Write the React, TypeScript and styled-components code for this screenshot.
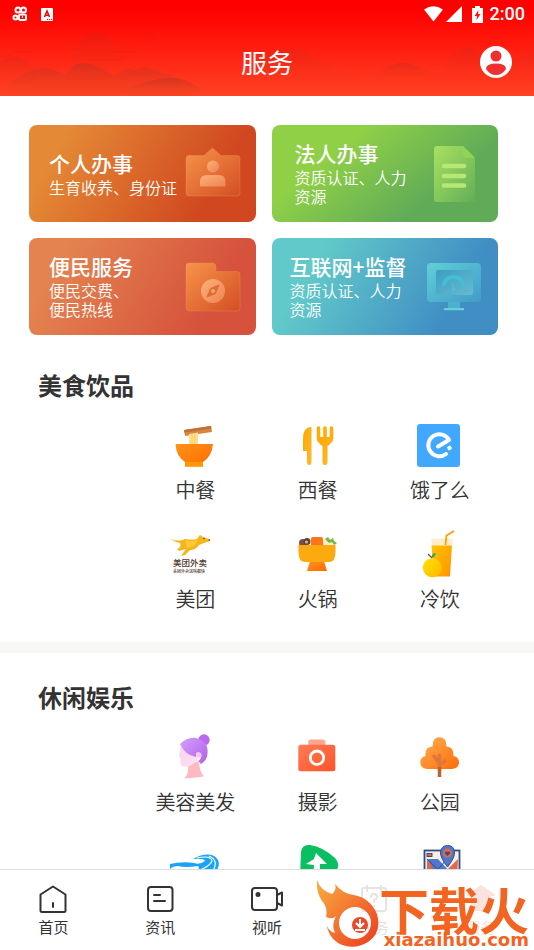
import React from "react";
import styled, { createGlobalStyle } from "styled-components";

const GlobalStyle = createGlobalStyle`
  * { box-sizing: border-box; }
  body { margin: 0; background: #fff; font-family: "Noto Sans CJK SC", sans-serif; color: #333; }
  a { color: inherit; text-decoration: none; }
  svg { display: block; overflow: visible; flex: none; }
`;

const Screen = styled.div`
  height: 100vh;
  display: flex;
  flex-direction: column;
  overflow: hidden;
`;

const Header = styled.header`
  position: relative;
  flex: none;
  background: linear-gradient(#ff0000 10%, #ff4223);
  color: #fff;
`;

const Hills = styled.svg`
  position: absolute;
  inset: 0;
  width: 100%;
  height: 100%;
`;

const StatusBar = styled.div`
  position: relative;
  height: 28px;
  padding: 0 9px 0 13px;
  display: flex;
  align-items: center;
  justify-content: space-between;
`;

const StatusGroup = styled.div<{ $gap: number }>`
  display: flex;
  align-items: center;
  gap: ${(p) => p.$gap}px;
`;

const Clock = styled.time`
  font: 500 18px/28px Roboto, sans-serif;
  margin-left: 2px;
`;

const TitleBar = styled.div`
  position: relative;
  height: 68px;
  padding: 0 26px;
  display: grid;
  grid-template-columns: 1fr auto 1fr;
  align-items: center;
`;

const PageTitle = styled.h1`
  grid-column: 2;
  margin: 0;
  font-size: 26px;
  line-height: 36px;
  font-weight: 400;
`;

const ProfileButton = styled.button`
  justify-self: end;
  margin-right: -4px;
  padding: 0;
  border: 0;
  background: none;
  color: #fff;
  cursor: pointer;
`;

const Content = styled.main`
  flex: 1;
  min-height: 0;
  overflow-y: auto;
  scrollbar-width: none;
`;

const CardGrid = styled.nav`
  display: grid;
  grid-template-columns: 1fr 1fr;
  gap: 16px;
  padding: 29px 36px 0 29px;
`;

const Card = styled.a<{ $fill: string; $inset: number }>`
  height: 97px;
  padding: 0 16px 0 ${(p) => p.$inset}px;
  border-radius: 8px;
  background: ${(p) => p.$fill};
  && { color: #fff; }
  display: flex;
  align-items: center;
  justify-content: space-between;
`;

const CardText = styled.div`
  padding-bottom: 3px;
  white-space: nowrap;
`;

const CardTitle = styled.h2`
  margin: 0;
  font-size: 21px;
  line-height: 30px;
  font-weight: 500;
`;

const CardNote = styled.p`
  margin: 0;
  font-size: 16px;
  line-height: 19px;
  font-weight: 350;
  white-space: pre-line;
`;

const CardIcon = styled.svg`
  width: 56px;
  height: 56px;
  margin-left: -16px;
`;

const Section = styled.section`
  padding: 32px 33px 31px 12px;
  & + & {
    border-top: 11px solid #f7f7f6;
    padding-top: 26px;
  }
`;

const SectionTitle = styled.h2`
  margin: 0 0 20px 26px;
  font-size: 24px;
  line-height: 36px;
  font-weight: 700;
`;

const ServiceGrid = styled.div`
  display: grid;
  grid-template-columns: repeat(4, 1fr);
  row-gap: 30px;
`;

const Service = styled.a<{ $first: boolean }>`
  ${(p) => (p.$first ? "grid-column-start: 2;" : "")}
  display: flex;
  flex-direction: column;
  align-items: center;
  gap: 11px;
  min-height: 79px;
  font-size: 20px;
  line-height: 24px;
  font-weight: 350;
  white-space: nowrap;
`;

const ServiceIcon = styled.svg`
  width: 44px;
  height: 44px;
`;

const TabBar = styled.nav`
  position: relative;
  flex: none;
  height: 81px;
  border-top: 1px solid #ddd;
  background: #fff;
  display: grid;
  grid-template-columns: repeat(5, 1fr);
`;

const Tab = styled.a<{ $tone: string }>`
  && { color: ${(p) => p.$tone}; }
  padding-top: 15px;
  display: flex;
  flex-direction: column;
  align-items: center;
  gap: 3px;
  font-size: 15px;
  line-height: 22px;
`;

const TabIcon = styled.svg`
  width: 34px;
  height: 28px;
  fill: none;
  stroke: currentColor;
  stroke-width: 2;
  stroke-linejoin: round;
  stroke-linecap: round;
`;

const Brand = styled.div`
  position: absolute;
  right: 5px;
  bottom: 1px;
  display: flex;
  align-items: flex-end;
  color: #f2641f;
`;

const BrandFlame = styled.svg`
  width: 62px;
  height: 67px;
  margin-bottom: 2px;
`;

const BrandWords = styled.div`
  display: flex;
  flex-direction: column;
  align-items: flex-end;
`;

const BrandName = styled.strong`
  font-size: 50px;
  line-height: 46px;
  font-weight: 700;
`;

const BrandSite = styled.span`
  font: 700 18px/18px "DejaVu Sans", sans-serif;
`;

const cards = [
  {
    title: "个人办事",
    note: "生育收养、身份证",
    inset: 20,
    fill: "linear-gradient(120deg, #e48935 15%, #d14820 78%)",
    icon: (
      <>
        <path d="M5 9.500H20L28.500 2L37 9.500H53Q56 9.500 56 12.500V47Q56 50 53 50H5Q2 50 2 47V12.500Q2 9.500 5 9.500Z" fill="url(#orange)" stroke="#f99b55" strokeOpacity=".3" />
        <circle cx="29" cy="20.500" r="6" fill="url(#peach)" />
        <path d="M16 40.500V36Q16 29 23 29H35Q41.500 29 41.500 36V40.500Z" fill="url(#peach)" />
      </>
    ),
  },
  {
    title: "法人办事",
    note: "资质认证、人力\n资源",
    inset: 23,
    fill: "linear-gradient(140deg, #8fd047 28%, #60ab58 72%)",
    icon: (
      <>
        <path d="M11 0H37L49 12V53Q49 56 46 56H11Q8 56 8 53V3Q8 0 11 0Z" fill="url(#lime)" />
        <path d="M37 0L49 12H40Q37 12 37 9Z" fill="#8ed553" />
        <path d="M18 20H38M18 30H38M18 39.500H38" stroke="#b7e876" strokeWidth="4.500" strokeLinecap="round" />
      </>
    ),
  },
  {
    title: "便民服务",
    note: "便民交费、\n便民热线",
    inset: 20,
    fill: "linear-gradient(120deg, #e4834f 15%, #d6523d 78%)",
    icon: (
      <>
        <path d="M5 4H28Q32 4 32 8V12.500H53Q56 12.500 56 15.500V49Q56 52 53 52H5Q2 52 2 49V7Q2 4 5 4Z" fill="url(#orange)" stroke="#f99b55" strokeOpacity=".3" />
        <circle cx="29" cy="32" r="12" fill="url(#peach)" />
        <path d="M35 26L31.500 34.500L23 38L26.500 29.500Z" fill="#df6d32" stroke="#df6d32" strokeLinejoin="round" />
        <circle cx="29" cy="32" r="2" fill="#f9a267" />
      </>
    ),
  },
  {
    title: "互联网+监督",
    note: "资质认证、人力\n资源",
    inset: 18,
    fill: "linear-gradient(120deg, #61c9c9 20%, #408ec4 78%)",
    icon: (
      <>
        <path d="M22 42H34V49H38V51.500H18V49H22Z" fill="#4bb1cd" />
        <path d="M18 50H38" stroke="#65cfe0" strokeWidth="2" />
        <rect x="1" y="4" width="54" height="39" rx="4" fill="url(#aqua)" />
        <rect x="10" y="11" width="37" height="25" rx="2" fill="url(#glass)" />
        <path d="M18 25Q20 18 28 18Q35 18 37 25" fill="none" stroke="#43bfd5" strokeWidth="4" strokeLinecap="round" />
        <path d="M26 23L30 31Q28 33 26 31Z" fill="#50bdd2" />
      </>
    ),
  },
];

type Item = { label?: string; hint?: string; icon: React.ReactNode };

const food: Item[] = [
  {
    label: "中餐",
    icon: (
      <>
        <path d="M11 7L38 3L39 9L12 13Z" fill="#d98542" />
        <path d="M11 7L38 3L38.500 5.500L11.500 9.500Z" fill="#c06f35" />
        <path d="M16 11L25 9.500V22H16Z" fill="#ffe08a" />
        <path d="M19 10.500V22M22 10V22" stroke="#ffc94d" strokeWidth=".7" />
        <path d="M2.500 21H40Q39 33 30 39V43.500H12V39Q3 33 2.500 21Z" fill="url(#bowl)" />
        <path d="M12 39H30V43.500H12Z" fill="#ff9800" />
      </>
    ),
  },
  {
    label: "西餐",
    icon: (
      <>
        <path d="M15.500 4V39.500Q15.500 42 13.200 42Q11 42 11 39.500V28H7V16Q7 4 15.500 4Z" fill="url(#amber)" />
        <path d="M22.500 5V15Q22.500 19.500 29 19.500Q35.500 19.500 35.500 15V5M29 5V20" stroke="#ffab0b" strokeWidth="3.600" strokeLinecap="round" fill="none" />
        <path d="M22 14H36Q36 21 31.500 23V39.500Q31.500 42 29 42Q26.500 42 26.500 39.500V23Q22 21 22 14Z" fill="url(#amber)" />
      </>
    ),
  },
  {
    label: "饿了么",
    icon: (
      <>
        <rect x="-1" y="1" width="43" height="43" rx="3" fill="#40a9ff" />
        <path d="M20 23.500L31 17A11 11 0 1 0 28 31" fill="none" stroke="#fff" strokeWidth="4" strokeLinecap="round" strokeLinejoin="round" />
        <rect x="29.500" y="23" width="4" height="4" rx="1" fill="#fff" transform="rotate(60 31.500 25)" />
      </>
    ),
  },
  {
    label: "美团",
    icon: (
      <>
        <path d="M-3 7Q6 10 12 7Q20 8 24 7L27 3L30 5L36 7L37 9L31 11L26 13Q23 18 17 18L12 23L8 24L13 17L6 19L4 17Q9 15 7 11Q2 10-3 7Z" fill="#f6b51c" />
        <path d="M12 8Q20 10 25 8L21 14L14 16Z" fill="#ffca35" />
        <path d="M35.500 7L37.500 8L36 9Z" fill="#392817" />
        <circle cx="31" cy="6.500" r=".7" fill="#392817" />
        <text x="0" y="34" fontSize="8.500" fontWeight="500" fill="#503a2b">美团外卖</text>
        <text x="0" y="41" fontSize="4" fontWeight="500" fill="#503a2b">美团外卖送啥都快</text>
      </>
    ),
  },
  {
    label: "火锅",
    icon: (
      <>
        <circle cx="7" cy="11" r="4" fill="#75513e" />
        <circle cx="11" cy="9.500" r="3.500" fill="#5e4436" />
        <circle cx="10.500" cy="10" r="1.500" fill="#d9b895" />
        <path d="M26 14L28 7L31 6L34 9L37 8L40 12L39 14Z" fill="#ffedc4" />
        <path d="M29 7L32 5L34 8L37 6L38 9L41 11L38 13L36 10L33 11Z" fill="#72b844" />
        <path d="M15 14V7Q15 5 17 5H25Q27 5 27 7V14Z" fill="#ff7418" />
        <path d="M14 29H28L31 39H11Z" fill="url(#bowl)" />
        <path d="M2.500 13H39.500V20Q39.500 30 33 30H9Q2.500 30 2.500 20Z" fill="#fcaa10" />
      </>
    ),
  },
  {
    label: "冷饮",
    icon: (
      <>
        <path d="M13.300 6.500H34.500L34 15H14Z" fill="#ffedcc" />
        <path d="M13.500 13.500H34L32 44.500H16Z" fill="url(#juice)" />
        <path d="M27.500 13L28.500 3.500L36 -1" fill="none" stroke="#ffa000" strokeWidth="1.800" />
        <circle cx="14.300" cy="35.700" r="9.500" fill="url(#fruit)" />
        <path d="M13.500 25Q14 21 17.500 21Q18 25 13.500 26Z" fill="#2eac66" />
        <path d="M14 26L10 22" stroke="#78503d" strokeWidth="1.300" />
      </>
    ),
  },
];

const leisure: Item[] = [
  {
    label: "美容美发",
    icon: (
      <>
        <path d="M11 31L26 26Q26 36 31 41.500Q20 43 11.500 43.500Q16 38 15 31Z" fill="#ffb9c1" />
        <path d="M8 10L6 22L7.500 23L7.500 29Q9 33 17 31L24 26L27 15Z" fill="url(#face)" />
        <circle cx="31" cy="5" r="5.700" fill="#ba68ec" />
        <path d="M7 9Q14 2 22 2.700Q36 6 34.500 19Q34 25 28 29L25.500 26Q29 23 28 19Q26 16 23 18V22Q12 20 7 9Z" fill="url(#hair)" />
        <circle cx="26" cy="20" r="2.600" fill="#f5c4ee" />
      </>
    ),
  },
  {
    label: "摄影",
    icon: (
      <>
        <path d="M12.300 10V7Q12.300 4.500 15 4.500H26.500Q29.300 4.500 29.300 7V10Z" fill="#ffa68d" />
        <rect x="2.300" y="9.700" width="37" height="26.500" rx="2.500" fill="url(#coral)" />
        <circle cx="21" cy="22.700" r="6.700" fill="none" stroke="#fff" strokeWidth="2.800" />
      </>
    ),
  },
  {
    label: "公园",
    icon: (
      <>
        <path d="M9 34Q2.300 33 2.300 27.500Q2.300 22 7.500 21Q6.500 12 14.500 11.500Q14.500 2.300 21.500 2.300Q28.500 2.300 28.500 11.500Q36 12 35.500 21Q41 22 41 27.500Q41 33 34 34Z" fill="url(#tree)" />
        <path d="M21.500 19V36M21.500 28L15 20M22 30L28 25" stroke="#e0773a" strokeWidth="3.500" />
        <path d="M21.500 32V42" stroke="#c2602c" strokeWidth="3.500" />
      </>
    ),
  },
  {
    hint: "游泳",
    icon: (
      <>
        <path d="M-3 20Q9 17 21 19Q27 21 32 17Q31 14 20 15Q33 8 41 12Q49 17 44 26Q38 34 20 32L8 27H22Q28 25 25 22Q12 24 5 22Q0 22-3 25Z" fill="#18a4f8" />
        <path d="M24 14Q38 11 39 17Q37 22 27 26M36 12Q46 16 40 27" fill="none" stroke="#fff" strokeWidth="1.200" />
      </>
    ),
  },
  {
    hint: "户外",
    icon: (
      <>
        <path d="M5 8Q6 0 14 1Q27 3 39 14Q45 20 40 27Q30 40 12 43Q4 44 4 33Z" fill="#0abf61" />
        <path d="M20 9L31 20H24V38H17L18 21L10 20L18 15Z" fill="#fff" />
      </>
    ),
  },
  {
    hint: "地图",
    icon: (
      <>
        <rect x="6.500" y="6.500" width="35" height="35" fill="#f5f0e7" stroke="#344c84" strokeWidth="1.800" />
        <path d="M9 15L18 23L9 32Z" fill="#df694a" />
        <path d="M10 15H20L34 30V38H20L15 25Z" fill="#4e78cf" />
        <path d="M40 15L29 26L39 34Z" fill="#df694a" />
        <path d="M9 15L35 40M28 16L11 36" stroke="#344c84" strokeWidth="1" />
        <rect x="9" y="9.500" width="5" height="3" fill="#df694a" stroke="#344c84" />
        <path d="M29.500 23Q22.500 14 22.500 9Q23 1.500 29.500 1.500Q36.500 1.500 36.500 9Q36.500 14 29.500 23Z" fill="#4e78cf" stroke="#344c84" />
        <circle cx="29.500" cy="9" r="4.500" fill="#df694a" />
        <path d="M29.500 12L26.800 9Q28 6.500 29.500 8.300Q31 6.500 32.200 9Z" fill="#344c84" />
      </>
    ),
  },
];

const tabs = [
  { label: "首页", tone: "#333", icon: <path d="M4.500 9.500L17 1.500L29.500 9.500V25.500Q29.500 27 28 27H6Q4.500 27 4.500 25.500V9.500M17 18V22" /> },
  {
    label: "资讯",
    tone: "#333",
    icon: (
      <>
        <rect x="5" y="2" width="24.500" height="24" rx="3" />
        <path d="M11 10H17M11 16H22" />
      </>
    ),
  },
  {
    label: "视听",
    tone: "#333",
    icon: (
      <>
        <rect x="2" y="3" width="25" height="22" rx="3" />
        <path d="M27 10L32 7.500V20.500L27 18" />
        <circle cx="8" cy="9.500" r="1.500" fill="currentColor" />
      </>
    ),
  },
  {
    label: "政务",
    tone: "#e6e3e2",
    icon: (
      <>
        <rect x="5" y="3" width="24" height="23" rx="2" />
        <path d="M10 1V6M24 1V6M14 12Q14 9 17 9Q20 9 20 12Q20 14 17 15V17M17 21V21" />
      </>
    ),
  },
  { label: "服务", tone: "#fde3df", icon: <path d="M4 10L17 1L30 10H26V25H8V10Z" fill="currentColor" /> },
];

const gradients: [string, string, string][] = [
  ["orange", "#f7944a", "#d34e24"],
  ["peach", "#ffb07a", "#ed8350"],
  ["lime", "#a9e160", "#63ae58"],
  ["aqua", "#60cfd6", "#429bc9"],
  ["glass", "#3d9dc2", "#65bbd0"],
  ["bowl", "#ff9419", "#ff6a00"],
  ["amber", "#ffa800", "#ffb82c"],
  ["juice", "#ffc400", "#ff9200"],
  ["fruit", "#ffe100", "#ffb900"],
  ["face", "#fbd2ec", "#ffe1f5"],
  ["hair", "#d4a0fb", "#b05eeb"],
  ["coral", "#ff7b56", "#ff5327"],
  ["tree", "#ffb052", "#ff6b08"],
  ["flame", "#faad42", "#ec3b1e"],
];

const Gradients = () => (
  <svg width="0" height="0" aria-hidden="true">
    <defs>
      {gradients.map(([id, from, to]) => (
        <linearGradient key={id} id={id} x1="0" y1="0" x2="1" y2="1">
          <stop stopColor={from} />
          <stop offset="1" stopColor={to} />
        </linearGradient>
      ))}
      <linearGradient id="hill" x1="0" y1="0" x2="0" y2="1">
        <stop stopColor="#bb3020" stopOpacity=".5" />
        <stop offset="1" stopColor="#e84a24" stopOpacity=".1" />
      </linearGradient>
      <linearGradient id="farHill" x1="0" y1="0" x2="0" y2="1">
        <stop stopColor="#b82a20" stopOpacity=".22" />
        <stop offset=".8" stopColor="#ee3a20" stopOpacity="0" />
      </linearGradient>
    </defs>
  </svg>
);

const ServiceSection = ({ title, items }: { title: string; items: Item[] }) => (
  <Section>
    <SectionTitle>{title}</SectionTitle>
    <ServiceGrid>
      {items.map((item, i) => (
        <Service key={i} href="#" $first={i % 3 === 0} aria-label={item.hint}>
          <ServiceIcon viewBox="0 0 44 44">{item.icon}</ServiceIcon>
          {item.label && <span>{item.label}</span>}
        </Service>
      ))}
    </ServiceGrid>
  </Section>
);

export default function App() {
  return (
    <Screen>
      <GlobalStyle />
      <Header>
        <Gradients />
        <Hills viewBox="0 0 534 96" preserveAspectRatio="none" aria-hidden="true">
          <path d="M64 75C75 45 83 33 95 33C108 33 121 49 130 72V96H64Z" fill="url(#farHill)" />
          <path d="M0 61Q20 50 34 68V96H0Z" fill="url(#farHill)" />
          <path d="M267 54Q290 42 308 55L350 74L400 96H267Z" fill="url(#farHill)" />
          <path d="M445 66Q460 39 477 51Q505 70 534 50V96H420Z" fill="url(#farHill)" />
          <path d="M0 90Q28 68 43 68Q55 68 65 76Q73 63 82 63Q94 63 114 76Q126 68 131 69Q137 71 139 69Q143 65 158 71L177 78L190 96H0Z" fill="url(#hill)" />
          <path d="M114 94Q152 77 174 78Q188 78 210 96H114Z" fill="url(#hill)" />
          <path d="M368 79Q391 63 402 63Q414 63 436 76Q420 84 402 84Q384 84 368 79Z" fill="url(#farHill)" />
          <path d="M368 79Q391 63 402 63Q414 63 436 76Z" fill="url(#farHill)" />
          <path d="M68 41H82M69 49H79M140 40H155Q157 37 148 37M142 34H152M90 60H125Q130 56 119 57M112 52H138M0 56H10Q9 51 14 52H35" fill="none" stroke="#cc1e18" strokeOpacity=".15" />
        </Hills>
        <StatusBar>
          <StatusGroup $gap={14}>
            <svg width="14" height="16" viewBox="0 0 14 16" fill="none" stroke="#fff" strokeWidth="2">
              <circle cx="5" cy="4" r="2.500" />
              <circle cx="10.500" cy="4" r="2.500" />
              <rect x="6" y="8.500" width="7" height="5.500" rx="1.500" />
              <circle cx="2.500" cy="11.500" r="2" />
              <path d="M9 11H10" />
            </svg>
            <svg width="12" height="13" viewBox="0 0 12 13">
              <rect width="12" height="13" rx="1" fill="#fff" />
              <path d="M3.500 9L6 3L8.500 9M4.500 7.200H7.500" fill="none" stroke="#e01010" strokeWidth="1.600" />
              <path d="M6 11.500H11" stroke="#e01010" strokeDasharray="1 1" />
            </svg>
          </StatusGroup>
          <StatusGroup $gap={3}>
            <svg width="19" height="16" viewBox="0 0 19 16"><path d="M0 3.500Q9.500-3 19 3.500L9.500 15.500Z" fill="#fff" /></svg>
            <svg width="16" height="16" viewBox="0 0 16 16"><path d="M16 0V16H0Z" fill="#fff" /></svg>
            <svg width="20" height="17" viewBox="0 0 20 17">
              <path d="M8 2H10V0H15V2H18V17H7V2Z" fill="#fff" />
              <path d="M13.500 4L9.500 10H12L11.500 14L15.500 8H13Z" fill="#ff1010" />
            </svg>
            <Clock>2:00</Clock>
          </StatusGroup>
        </StatusBar>
        <TitleBar>
          <PageTitle>服务</PageTitle>
          <ProfileButton aria-label="个人中心">
            <svg width="32" height="32" viewBox="0 0 32 32">
              <circle cx="16" cy="16" r="16" fill="#fff" />
              <circle cx="16" cy="10" r="5.500" fill="#f03030" />
              <path d="M6 23Q6 17.500 16 17.500Q26 17.500 26 23Q22 29 16 29Q10 29 6 23Z" fill="#f03030" />
            </svg>
          </ProfileButton>
        </TitleBar>
      </Header>

      <Content>
        <CardGrid aria-label="办事服务">
          {cards.map((card) => (
            <Card key={card.title} href="#" $fill={card.fill} $inset={card.inset}>
              <CardText>
                <CardTitle>{card.title}</CardTitle>
                <CardNote>{card.note}</CardNote>
              </CardText>
              <CardIcon viewBox="0 0 56 56">{card.icon}</CardIcon>
            </Card>
          ))}
        </CardGrid>
        <ServiceSection title="美食饮品" items={food} />
        <ServiceSection title="休闲娱乐" items={leisure} />
      </Content>

      <TabBar aria-label="主导航">
        {tabs.map((tab) => (
          <Tab key={tab.label} href="#" $tone={tab.tone}>
            <TabIcon viewBox="0 0 34 28">{tab.icon}</TabIcon>
            {tab.label}
          </Tab>
        ))}
        <Brand>
          <BrandFlame viewBox="0 0 62 67">
            <path fillRule="evenodd" d="M0 0Q3 10 15 14Q20 10 18 4Q26 14 37 15Q53 18 60 34Q65 53 51 62Q36 71 21 63Q11 57 9 42Q10 51 18 53Q14 45 19 36Q16 40 9 37Q11 27 5 21Q-1 12 0 0ZM38 27A16 16 0 1 0 38 59A16 16 0 1 0 38 27Z" fill="url(#flame)" />
            <circle cx="43" cy="45" r="8" fill="#ea4928" />
            <path d="M43 39V46M39 43L43 47L47 43M38 50H48" fill="none" stroke="#fff" strokeWidth="2" />
          </BrandFlame>
          <BrandWords>
            <BrandName>下载火</BrandName>
            <BrandSite>xiazaihuo.com</BrandSite>
          </BrandWords>
        </Brand>
      </TabBar>
    </Screen>
  );
}
